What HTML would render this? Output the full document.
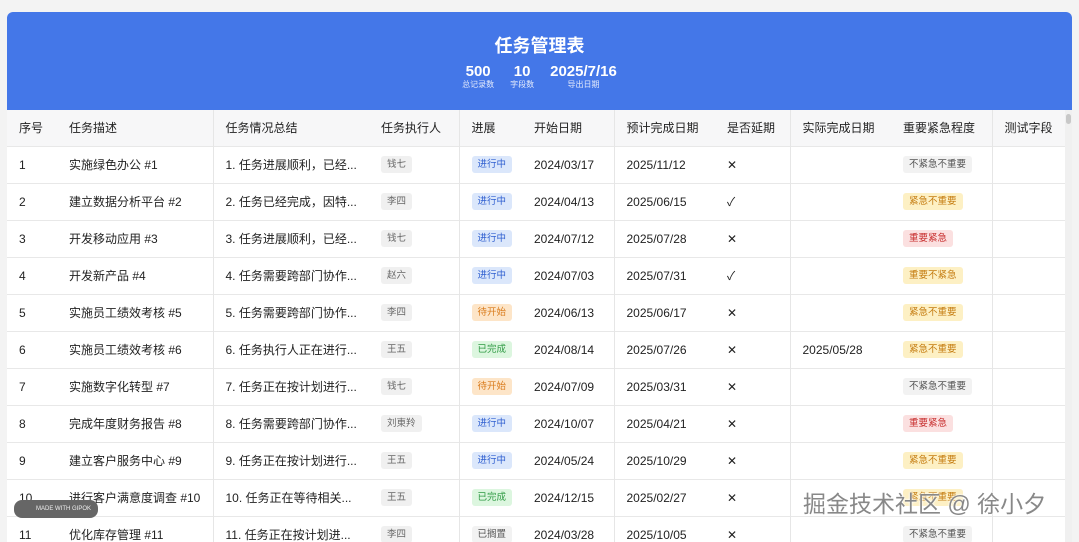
<!DOCTYPE html>
<html><head><meta charset="utf-8"><style>
*{box-sizing:border-box;margin:0;padding:0}
body{width:1079px;height:533px;overflow:hidden;background:#f3f3f3;font-family:"Liberation Sans","Noto Sans CJK SC",sans-serif;color:#222;position:relative}
.card{position:absolute;left:7px;top:12px;width:1065px;height:530px;background:#fff;border-radius:6px 6px 0 0;overflow:hidden}
.hd{height:98px;background:#4477e8;color:#fff;text-align:center;position:relative}
.hd h1{position:absolute;top:20px;left:0;right:0;font-size:18px;font-weight:bold}
.stats{position:absolute;top:51px;left:0;right:0;display:flex;justify-content:center;gap:16px}
.st{text-align:center}
.st b{display:block;font-size:15px;line-height:17px}
.st span{display:block;font-size:8px;opacity:.85;line-height:10px}
table{border-collapse:collapse;table-layout:fixed;width:1058px;font-size:12px}
th{height:36px;background:#f7f7f8;font-weight:normal;text-align:left;padding-left:12px;color:#222;font-size:12px}
td{height:37px;padding-left:12px;border-top:1px solid #e8e8e8;white-space:nowrap;overflow:hidden}
.b{border-right:1px solid #e6e6e6}
.t{display:inline-block;font-size:9.5px;padding:3px 6px;border-radius:3px;line-height:11px}
.p{background:#f0f0f0;color:#666}
.blue{background:#dbe7fb;color:#2f5fd0}
.or{background:#fde5c8;color:#d97a1a}
.gr{background:#dcf6df;color:#2e9a43}
.gy{background:#f2f2f2;color:#555}
.ye{background:#fdf0c4;color:#c57d12}
.rd{background:#fbe0e0;color:#c83030}
.scroll{position:absolute;right:0;top:98px;width:7px;height:440px;background:#f0f0f0}
.scroll i{position:absolute;left:1px;top:4px;width:5px;height:10px;background:#c8c8c8;border-radius:3px}
.wm{position:absolute;left:803px;top:485px;font-size:23px;color:#888;text-shadow:0 0 2px #fff,0 0 2px #fff}
.badge{position:absolute;left:14px;top:500px;width:84px;height:18px;border-radius:8px;background:#666;color:#eee;font-size:6px;line-height:18px;padding-left:22px}
</style></head><body>
<div class="card">
<div class="hd"><h1>任务管理表</h1>
<div class="stats"><div class="st"><b>500</b><span>总记录数</span></div><div class="st"><b>10</b><span>字段数</span></div><div class="st"><b>2025/7/16</b><span>导出日期</span></div></div></div>
<table>
<colgroup><col style="width:50px"><col style="width:156px"><col style="width:156px"><col style="width:90px"><col style="width:63px"><col style="width:92px"><col style="width:101px"><col style="width:75px"><col style="width:101px"><col style="width:101px"><col style="width:73px"></colgroup>
<tr><th>序号</th><th class="b">任务描述</th><th>任务情况总结</th><th class="b">任务执行人</th><th>进展</th><th class="b">开始日期</th><th>预计完成日期</th><th class="b">是否延期</th><th>实际完成日期</th><th class="b">重要紧急程度</th><th>测试字段</th></tr>
<tr><td>1</td><td class="b">实施绿色办公 #1</td><td>1. 任务进展顺利，已经...</td><td class="b"><span class="t p">钱七</span></td><td><span class="t blue">进行中</span></td><td class="b">2024/03/17</td><td>2025/11/12</td><td class="b">✕</td><td></td><td class="b"><span class="t gy">不紧急不重要</span></td><td></td></tr>
<tr><td>2</td><td class="b">建立数据分析平台 #2</td><td>2. 任务已经完成，因特...</td><td class="b"><span class="t p">李四</span></td><td><span class="t blue">进行中</span></td><td class="b">2024/04/13</td><td>2025/06/15</td><td class="b">✓</td><td></td><td class="b"><span class="t ye">紧急不重要</span></td><td></td></tr>
<tr><td>3</td><td class="b">开发移动应用 #3</td><td>3. 任务进展顺利，已经...</td><td class="b"><span class="t p">钱七</span></td><td><span class="t blue">进行中</span></td><td class="b">2024/07/12</td><td>2025/07/28</td><td class="b">✕</td><td></td><td class="b"><span class="t rd">重要紧急</span></td><td></td></tr>
<tr><td>4</td><td class="b">开发新产品 #4</td><td>4. 任务需要跨部门协作...</td><td class="b"><span class="t p">赵六</span></td><td><span class="t blue">进行中</span></td><td class="b">2024/07/03</td><td>2025/07/31</td><td class="b">✓</td><td></td><td class="b"><span class="t ye">重要不紧急</span></td><td></td></tr>
<tr><td>5</td><td class="b">实施员工绩效考核 #5</td><td>5. 任务需要跨部门协作...</td><td class="b"><span class="t p">李四</span></td><td><span class="t or">待开始</span></td><td class="b">2024/06/13</td><td>2025/06/17</td><td class="b">✕</td><td></td><td class="b"><span class="t ye">紧急不重要</span></td><td></td></tr>
<tr><td>6</td><td class="b">实施员工绩效考核 #6</td><td>6. 任务执行人正在进行...</td><td class="b"><span class="t p">王五</span></td><td><span class="t gr">已完成</span></td><td class="b">2024/08/14</td><td>2025/07/26</td><td class="b">✕</td><td>2025/05/28</td><td class="b"><span class="t ye">紧急不重要</span></td><td></td></tr>
<tr><td>7</td><td class="b">实施数字化转型 #7</td><td>7. 任务正在按计划进行...</td><td class="b"><span class="t p">钱七</span></td><td><span class="t or">待开始</span></td><td class="b">2024/07/09</td><td>2025/03/31</td><td class="b">✕</td><td></td><td class="b"><span class="t gy">不紧急不重要</span></td><td></td></tr>
<tr><td>8</td><td class="b">完成年度财务报告 #8</td><td>8. 任务需要跨部门协作...</td><td class="b"><span class="t p">刘東羚</span></td><td><span class="t blue">进行中</span></td><td class="b">2024/10/07</td><td>2025/04/21</td><td class="b">✕</td><td></td><td class="b"><span class="t rd">重要紧急</span></td><td></td></tr>
<tr><td>9</td><td class="b">建立客户服务中心 #9</td><td>9. 任务正在按计划进行...</td><td class="b"><span class="t p">王五</span></td><td><span class="t blue">进行中</span></td><td class="b">2024/05/24</td><td>2025/10/29</td><td class="b">✕</td><td></td><td class="b"><span class="t ye">紧急不重要</span></td><td></td></tr>
<tr><td>10</td><td class="b">进行客户满意度调查 #10</td><td>10. 任务正在等待相关...</td><td class="b"><span class="t p">王五</span></td><td><span class="t gr">已完成</span></td><td class="b">2024/12/15</td><td>2025/02/27</td><td class="b">✕</td><td></td><td class="b"><span class="t ye">紧急不重要</span></td><td></td></tr>
<tr><td>11</td><td class="b">优化库存管理 #11</td><td>11. 任务正在按计划进...</td><td class="b"><span class="t p">李四</span></td><td><span class="t gy">已搁置</span></td><td class="b">2024/03/28</td><td>2025/10/05</td><td class="b">✕</td><td></td><td class="b"><span class="t gy">不紧急不重要</span></td><td></td></tr>
</table>
<div class="scroll"><i></i></div>
</div>
<div class="badge">MADE WITH GIPOK</div>
<div class="wm">掘金技术社区 @ 徐小夕</div>
</body></html>
